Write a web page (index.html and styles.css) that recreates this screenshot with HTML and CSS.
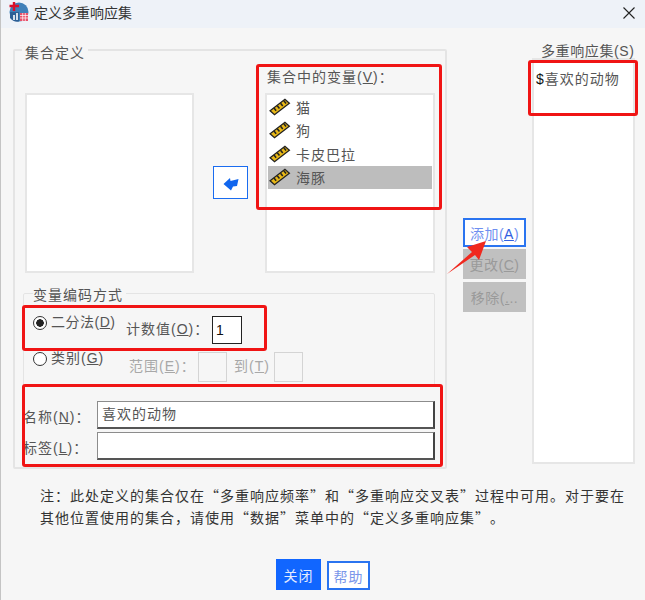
FILE: index.html
```html
<!DOCTYPE html>
<html lang="zh-CN">
<head>
    <meta charset="UTF-8">
    <title>定义多重响应集</title>
    <link rel="stylesheet" href="styles.css">
</head>
<body>
    <svg class="defs" width="0" height="0">
        <symbol id="ruler" viewBox="0 0 20 16">
            <path d="M1 11.5 L14.5 1 L18.5 4.5 L5 15 Z" fill="#e8b818" stroke="#222" stroke-width="1.2"/>
            <path d="M4.5 9 L6.5 11.5 M7.5 6.8 L9.5 9.3 M10.5 4.5 L12.5 7 M13.5 2.3 L15.5 4.8" stroke="#222" stroke-width="1.4"/>
        </symbol>
    </svg>
    <div class="dialog">
        <div class="titlebar">
            <svg class="app-icon" width="20" height="20" viewBox="0 0 20 20">
                <circle cx="10" cy="10" r="9.5" fill="#3f7fb8"/>
                <path d="M1 16 A9.5 9.5 0 0 0 10 19.5 L10 10 L1 10 Z" fill="#2d5f95"/>
                <rect x="11" y="11" width="8" height="8" fill="#e8506a"/>
                <path d="M11 13.5 H19 M11 16 H19 M13.7 11 V19 M16.3 11 V19" stroke="#fff" stroke-width=".7"/>
                <path d="M5 0 V9 M0.5 4 H10" stroke="#d8102a" stroke-width="2.4"/>
                <path d="M5 13 V18 M8 11 V18" stroke="#fff" stroke-width="1.6"/>
            </svg>
            <span class="title">定义多重响应集</span>
            <svg class="close" width="12" height="12" viewBox="0 0 12 12">
                <path d="M.5 .5 L11.5 11.5 M11.5 .5 L.5 11.5" stroke="#222" stroke-width="1.1"/>
            </svg>
        </div>

        <div class="content">
            <fieldset class="set-group">
                <legend>集合定义</legend>
                <div class="lists-row">
                    <div class="listbox source"></div>
                    <button class="move-btn" type="button">
                        <svg width="16" height="14" viewBox="0 0 16 14">
                            <path d="M0.5 7 L7 1 L7.5 4 L15.5 2 L14 9 L10 9.5 L8 13.5 Z" fill="#1166ee"/>
                        </svg>
                    </button>
                    <div class="vars-col">
                        <div class="label">集合中的变量(<u>V</u>)：</div>
                        <div class="listbox vars">
                            <div class="var-item"><svg width="22" height="18"><use href="#ruler"/></svg>猫</div>
                            <div class="var-item"><svg width="22" height="18"><use href="#ruler"/></svg>狗</div>
                            <div class="var-item"><svg width="22" height="18"><use href="#ruler"/></svg>卡皮巴拉</div>
                            <div class="var-item selected"><svg width="22" height="18"><use href="#ruler"/></svg>海豚</div>
                        </div>
                    </div>
                </div>

                <fieldset class="coding-group">
                    <legend>变量编码方式</legend>
                    <div class="coding-row first">
                        <span class="radio checked"></span>
                        <span class="radio-label">二分法(<u>D</u>)</span>
                        <span class="count-label">计数值(<u>O</u>)：</span>
                        <span class="count-input">1</span>
                    </div>
                    <div class="coding-row second">
                        <span class="radio"></span>
                        <span class="radio-label">类别(<u>G</u>)</span>
                        <span class="range-label muted">范围(<u>E</u>)：</span>
                        <span class="range-box"></span>
                        <span class="to-label muted">到(<u>T</u>)</span>
                        <span class="range-box"></span>
                    </div>
                </fieldset>

                <div class="field-row name-row">
                    <span class="field-label">名称(<u>N</u>)：</span>
                    <span class="text-input">喜欢的动物</span>
                </div>
                <div class="field-row">
                    <span class="field-label">标签(<u>L</u>)：</span>
                    <span class="text-input"></span>
                </div>
            </fieldset>

            <div class="action-col">
                <button class="btn add" type="button">添加(<u>A</u>)</button>
                <button class="btn off" type="button">更改(<u>C</u>)</button>
                <button class="btn off" type="button">移除(<u>.</u>..</button>
            </div>

            <div class="sets-col">
                <div class="sets-label">多重响应集(S)</div>
                <div class="listbox sets"><span class="dollar">$</span>喜欢的动物</div>
            </div>
        </div>

        <p class="note">注：此处定义的集合仅在“多重响应频率”和“多重响应交叉表”过程中可用。对于要在其他位置使用的集合，请使用“数据”菜单中的“定义多重响应集”。</p>

        <div class="footer">
            <button class="foot-btn primary" type="button">关闭</button>
            <button class="foot-btn help" type="button">帮助</button>
        </div>

        <!-- red annotations drawn over the dialog -->
        <div class="mark mark-vars"></div>
        <div class="mark mark-sets"></div>
        <div class="mark mark-count"></div>
        <div class="mark mark-name"></div>
        <svg class="mark-arrow" width="40" height="34" viewBox="0 0 40 34">
            <path d="M0 33 L25 11 L20 6 L39 0 L32 19 L28 14 Z" fill="#f0281e"/>
        </svg>
    </div>
</body>
</html>
```

FILE: styles.css
```css
* { box-sizing: border-box; }
html, body { margin: 0; padding: 0; }
body { width: 645px; height: 600px; overflow: hidden; background: #f6f6f6; }
u { text-underline-offset: 1px; }
.defs { position: absolute; }

.dialog {
    position: relative;
    width: 645px;
    height: 600px;
    display: flex;
    flex-direction: column;
    font-family: "Liberation Sans", "Noto Sans CJK SC", sans-serif;
    font-size: 14px;
    letter-spacing: 1px;
    color: #555;
    border-left: 1px solid #c4c4c4;
}

.titlebar {
    display: flex;
    align-items: center;
    height: 28px;
    flex: none;
    padding: 0 10px 4px 8px;
    background: #eef2f8;
}
.app-icon { flex: none; }
.title { margin-left: 5px; color: #333; letter-spacing: 0; }
.close { margin-left: auto; margin-top: 2px; }

.content {
    display: flex;
    align-items: flex-start;
    height: 441px;
    flex: none;
    padding: 16px 0 0 12px;
}

fieldset { margin: 0; min-width: 0; border: 2px solid #e4e4e4; border-radius: 2px; }
legend { padding: 0 3px; line-height: 16px; }

.set-group {
    width: 434px;
    height: 430px;
    margin-top: -5px;
    padding: 0 10px 0 8px;
}
.set-group > legend { margin-left: -1px; padding-top: 6px; }

.lists-row { display: flex; align-items: flex-start; height: 210px; padding-left: 2px; }
.listbox { background: #fff; border: 2px solid #e6e6e6; }
.source { width: 169px; height: 180px; margin-top: 32px; flex: none; }
.move-btn {
    width: 35px;
    height: 33px;
    flex: none;
    margin: 105px 0 0 19px;
    padding: 2px 0 0;
    display: flex;
    align-items: center;
    justify-content: center;
    background: #fff;
    border: 1px solid #1a6cf0;
}
.vars-col { margin-left: 17px; width: 170px; }
.label { height: 32px; padding: 7px 0 0 2px; line-height: 18px; }
.vars { height: 180px; padding: 0 1px; }
.var-item { display: flex; align-items: center; height: 23.5px; padding-left: 1px; }
.var-item svg { margin-right: 5px; flex: none; }
.selected { background: #bdbdbd; }

.coding-group {
    height: 103px;
    margin: 12px 0 0;
    padding: 0 0 0 9px;
    border-width: 1px;
}
.coding-group > legend { margin-left: 0; padding: 4px 3px 0 0; }
.coding-row { display: flex; }
.first { height: 45px; padding-top: 9px; }
.second { height: 36px; }
.radio {
    width: 14px;
    height: 14px;
    flex: none;
    margin-top: 4px;
    border: 1.5px solid #333;
    border-radius: 50%;
    background: #fff;
}
.checked { background: radial-gradient(circle, #222 0 3.5px, #fff 4px); }
.radio-label { margin-left: 4px; line-height: 20px; }
.first .radio-label { width: 75px; letter-spacing: .5px; }
.second .radio-label { width: 78px; }
.count-label { margin-top: 7px; width: 86px; line-height: 20px; flex: none; }
.count-input {
    width: 30px;
    height: 28px;
    margin-top: 4px;
    padding-left: 3px;
    background: #fff;
    border: 1px solid #222;
    color: #111;
    line-height: 26px;
}
.muted { color: #a8a8a8; }
.range-label { margin-top: 9px; width: 69px; line-height: 18px; flex: none; }
.range-box { width: 29px; height: 30px; margin-top: 4px; flex: none; border: 1px solid #d4d4d4; }
.to-label { margin: 9px 0 0 7px; width: 40px; line-height: 18px; flex: none; }

.field-row { display: flex; align-items: center; height: 28px; margin: 3px 0 0; }
.name-row { margin-top: 15px; }
.field-label { width: 74px; flex: none; margin-top: 1px; }
.text-input {
    width: 338px;
    height: 28px;
    padding: 0 4px;
    background: #fff;
    border: 1px solid #8c8c8c;
    border-right: 2px solid #444;
    border-bottom: 2px solid #555;
    line-height: 25px;
}

.action-col { display: flex; flex-direction: column; width: 63px; margin: 174px 0 0 16px; flex: none; }
.btn {
    height: 30px;
    margin-bottom: 3px;
    padding: 0;
    font: inherit;
    letter-spacing: .5px;
    white-space: nowrap;
    border: none;
    background: #c0c0c0;
    color: #9a9a9a;
}
.btn.add {
    height: 29px;
    margin-bottom: 2px;
    background: #fff;
    border: 2px solid #2a74f0;
    color: #6f8ff0;
}
.btn.add u { color: #3060e0; }

.sets-col { margin-left: 6px; width: 103px; flex: none; }
.sets-label { height: 14px; padding-left: 9px; line-height: 14px; letter-spacing: .6px; white-space: nowrap; }
.sets { height: 406px; padding: 8px 2px; line-height: 22px; }
.dollar { color: #111; }

.note {
    margin: 15px 0 0;
    padding: 0 18px 0 39px;
    font-family: "Noto Sans CJK SC", sans-serif;
    text-spacing-trim: space-all;
    color: #333;
    line-height: 22px;
    flex: none;
}

.footer { display: flex; align-items: flex-end; gap: 6px; height: 31px; margin-top: 31px; padding-left: 275px; flex: none; }
.foot-btn { padding: 0; font: inherit; letter-spacing: 1px; }
.primary { width: 45px; height: 31px; background: #1166ff; border: none; color: #e4ecff; }
.help { width: 43px; height: 29px; background: #fff; border: 2px solid #2a74f0; color: #7a96ea; }

.mark { position: absolute; border: 3px solid #f01414; border-radius: 3px; pointer-events: none; }
.mark-vars { left: 255px; top: 64px; width: 186px; height: 146px; }
.mark-sets { left: 527px; top: 60px; width: 110px; height: 56px; }
.mark-count { left: 21px; top: 305px; width: 245px; height: 46px; }
.mark-name { left: 21px; top: 384px; width: 421px; height: 83px; }
.mark-arrow { position: absolute; left: 446px; top: 241px; }
```
